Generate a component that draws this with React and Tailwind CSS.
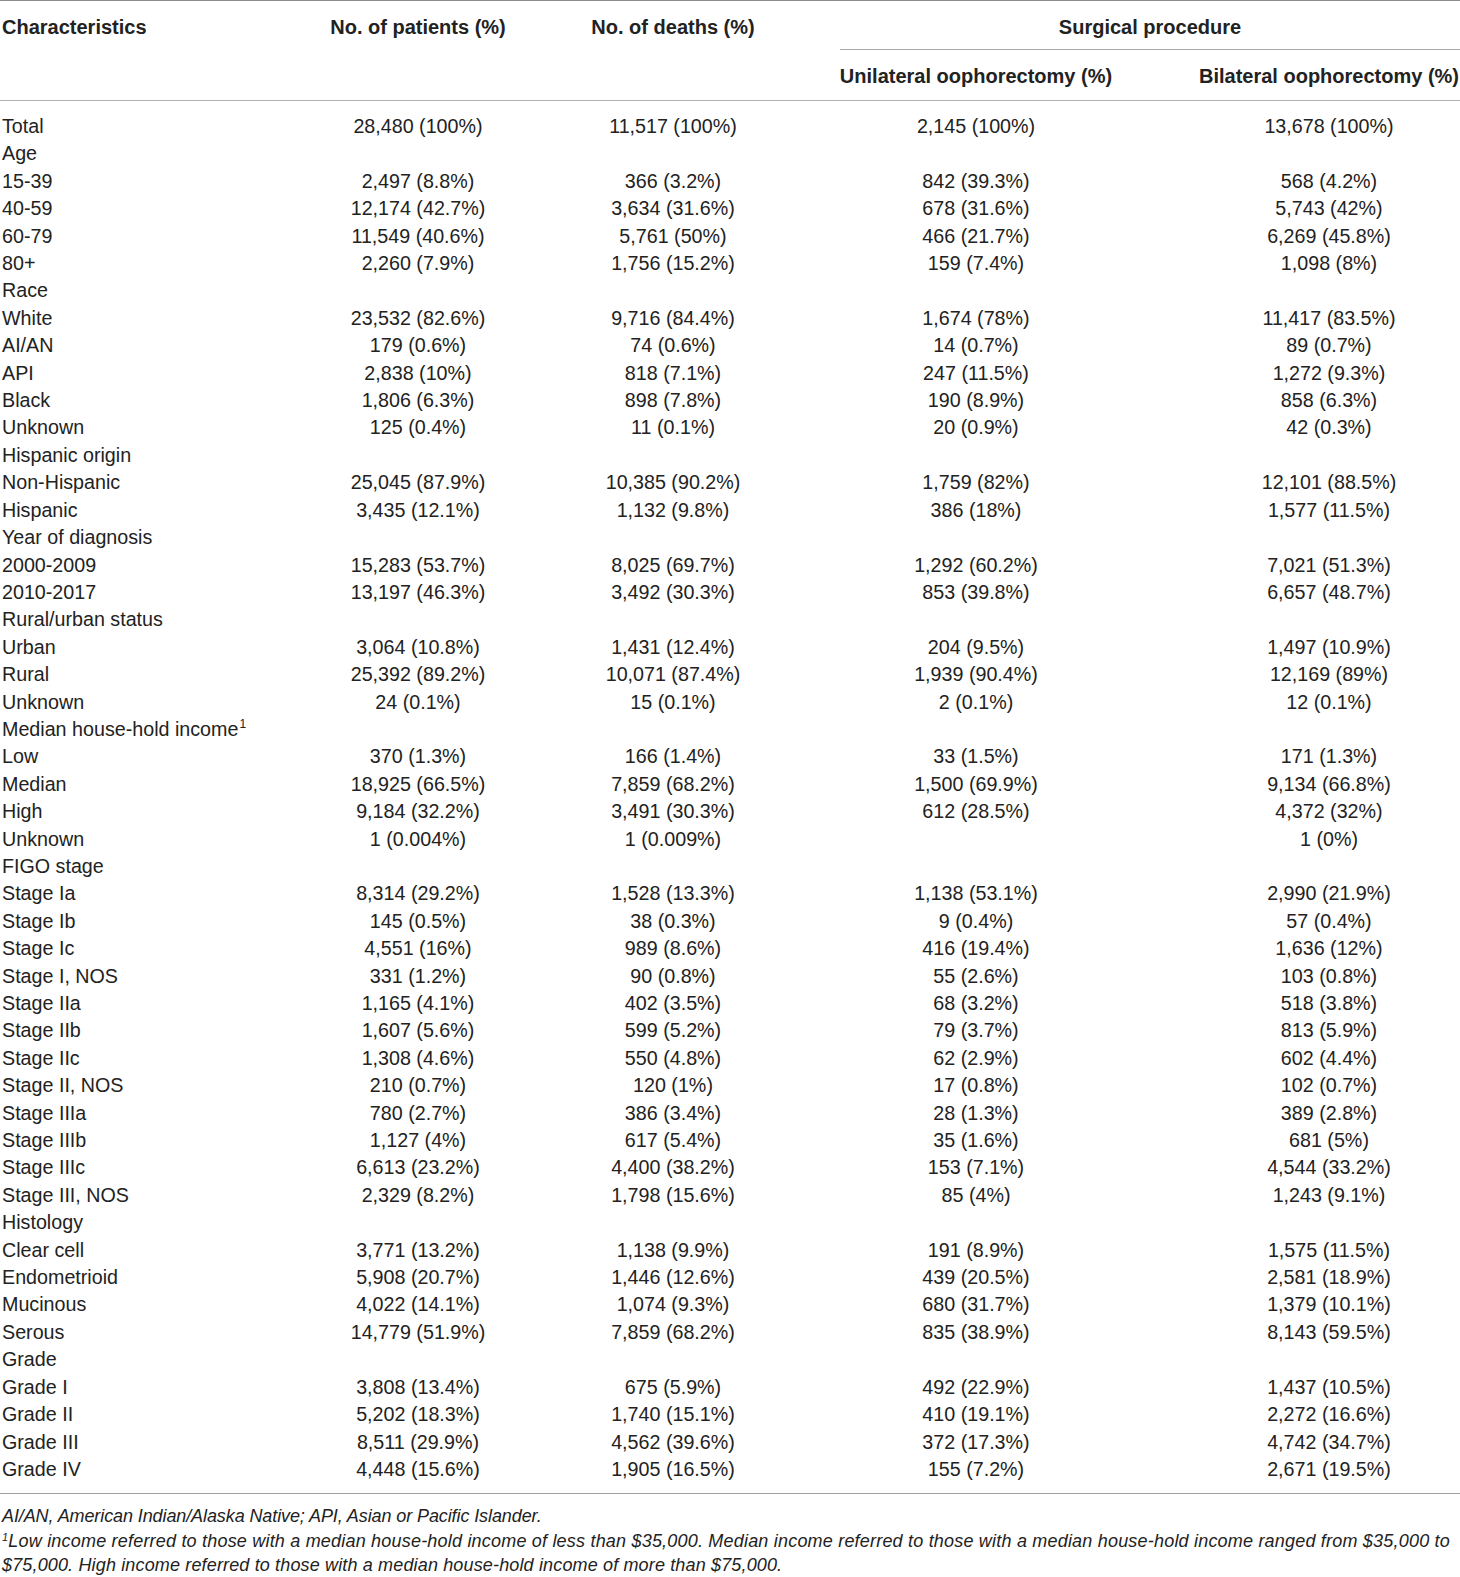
import React from 'react';

const rows = [
  ['Total', '28,480 (100%)', '11,517 (100%)', '2,145 (100%)', '13,678 (100%)'],
  ['Age'],
  ['15-39', '2,497 (8.8%)', '366 (3.2%)', '842 (39.3%)', '568 (4.2%)'],
  ['40-59', '12,174 (42.7%)', '3,634 (31.6%)', '678 (31.6%)', '5,743 (42%)'],
  ['60-79', '11,549 (40.6%)', '5,761 (50%)', '466 (21.7%)', '6,269 (45.8%)'],
  ['80+', '2,260 (7.9%)', '1,756 (15.2%)', '159 (7.4%)', '1,098 (8%)'],
  ['Race'],
  ['White', '23,532 (82.6%)', '9,716 (84.4%)', '1,674 (78%)', '11,417 (83.5%)'],
  ['AI/AN', '179 (0.6%)', '74 (0.6%)', '14 (0.7%)', '89 (0.7%)'],
  ['API', '2,838 (10%)', '818 (7.1%)', '247 (11.5%)', '1,272 (9.3%)'],
  ['Black', '1,806 (6.3%)', '898 (7.8%)', '190 (8.9%)', '858 (6.3%)'],
  ['Unknown', '125 (0.4%)', '11 (0.1%)', '20 (0.9%)', '42 (0.3%)'],
  ['Hispanic origin'],
  ['Non-Hispanic', '25,045 (87.9%)', '10,385 (90.2%)', '1,759 (82%)', '12,101 (88.5%)'],
  ['Hispanic', '3,435 (12.1%)', '1,132 (9.8%)', '386 (18%)', '1,577 (11.5%)'],
  ['Year of diagnosis'],
  ['2000-2009', '15,283 (53.7%)', '8,025 (69.7%)', '1,292 (60.2%)', '7,021 (51.3%)'],
  ['2010-2017', '13,197 (46.3%)', '3,492 (30.3%)', '853 (39.8%)', '6,657 (48.7%)'],
  ['Rural/urban status'],
  ['Urban', '3,064 (10.8%)', '1,431 (12.4%)', '204 (9.5%)', '1,497 (10.9%)'],
  ['Rural', '25,392 (89.2%)', '10,071 (87.4%)', '1,939 (90.4%)', '12,169 (89%)'],
  ['Unknown', '24 (0.1%)', '15 (0.1%)', '2 (0.1%)', '12 (0.1%)'],
  ['Median house-hold income', null, null, null, null, true],
  ['Low', '370 (1.3%)', '166 (1.4%)', '33 (1.5%)', '171 (1.3%)'],
  ['Median', '18,925 (66.5%)', '7,859 (68.2%)', '1,500 (69.9%)', '9,134 (66.8%)'],
  ['High', '9,184 (32.2%)', '3,491 (30.3%)', '612 (28.5%)', '4,372 (32%)'],
  ['Unknown', '1 (0.004%)', '1 (0.009%)', '', '1 (0%)'],
  ['FIGO stage'],
  ['Stage Ia', '8,314 (29.2%)', '1,528 (13.3%)', '1,138 (53.1%)', '2,990 (21.9%)'],
  ['Stage Ib', '145 (0.5%)', '38 (0.3%)', '9 (0.4%)', '57 (0.4%)'],
  ['Stage Ic', '4,551 (16%)', '989 (8.6%)', '416 (19.4%)', '1,636 (12%)'],
  ['Stage I, NOS', '331 (1.2%)', '90 (0.8%)', '55 (2.6%)', '103 (0.8%)'],
  ['Stage IIa', '1,165 (4.1%)', '402 (3.5%)', '68 (3.2%)', '518 (3.8%)'],
  ['Stage IIb', '1,607 (5.6%)', '599 (5.2%)', '79 (3.7%)', '813 (5.9%)'],
  ['Stage IIc', '1,308 (4.6%)', '550 (4.8%)', '62 (2.9%)', '602 (4.4%)'],
  ['Stage II, NOS', '210 (0.7%)', '120 (1%)', '17 (0.8%)', '102 (0.7%)'],
  ['Stage IIIa', '780 (2.7%)', '386 (3.4%)', '28 (1.3%)', '389 (2.8%)'],
  ['Stage IIIb', '1,127 (4%)', '617 (5.4%)', '35 (1.6%)', '681 (5%)'],
  ['Stage IIIc', '6,613 (23.2%)', '4,400 (38.2%)', '153 (7.1%)', '4,544 (33.2%)'],
  ['Stage III, NOS', '2,329 (8.2%)', '1,798 (15.6%)', '85 (4%)', '1,243 (9.1%)'],
  ['Histology'],
  ['Clear cell', '3,771 (13.2%)', '1,138 (9.9%)', '191 (8.9%)', '1,575 (11.5%)'],
  ['Endometrioid', '5,908 (20.7%)', '1,446 (12.6%)', '439 (20.5%)', '2,581 (18.9%)'],
  ['Mucinous', '4,022 (14.1%)', '1,074 (9.3%)', '680 (31.7%)', '1,379 (10.1%)'],
  ['Serous', '14,779 (51.9%)', '7,859 (68.2%)', '835 (38.9%)', '8,143 (59.5%)'],
  ['Grade'],
  ['Grade I', '3,808 (13.4%)', '675 (5.9%)', '492 (22.9%)', '1,437 (10.5%)'],
  ['Grade II', '5,202 (18.3%)', '1,740 (15.1%)', '410 (19.1%)', '2,272 (16.6%)'],
  ['Grade III', '8,511 (29.9%)', '4,562 (39.6%)', '372 (17.3%)', '4,742 (34.7%)'],
  ['Grade IV', '4,448 (15.6%)', '1,905 (16.5%)', '155 (7.2%)', '2,671 (19.5%)'],
];

const cols = 'grid grid-cols-[290px_256px_254px_352px_308px]';

export default function App() {
  return (
    <div
      className="w-[1460px] bg-white text-[#222] min-h-[1577px]"
      style={{ fontFamily: '"Liberation Sans", Arial, sans-serif' }}
    >
      {/* Header */}
      <div className="border-t-[1.5px] border-b-[1.5px] border-t-[#8c8c8c] border-b-[#b0b0b0]">
        <div className={`${cols} grid-rows-[49px_50px] text-[20px] font-bold leading-[28px]`}>
          <div className="pl-[2px] pt-[12px]">Characteristics</div>
          <div className="text-center pt-[12px]">No. of patients (%)</div>
          <div className="text-center pt-[12px]">No. of deaths (%)</div>
          <div className="col-span-2 pl-[40px]">
            <div className="h-[49px] border-b-[1.5px] border-[#a8a8a8] pt-[12px] text-center">
              Surgical procedure
            </div>
          </div>
          <div />
          <div />
          <div />
          <div className="text-center pt-[12px] whitespace-nowrap">Unilateral oophorectomy (%)</div>
          <div className="pl-[46px] text-center pt-[12px] whitespace-nowrap">Bilateral oophorectomy (%)</div>
        </div>
      </div>

      {/* Body */}
      <div className="pt-[12px] pb-[10px] border-b-[1.5px] border-[#a0a0a0] text-[19.7px] leading-[27.42px]">
        {rows.map((r, i) => (
          <div key={i} className={`${cols} h-[27.42px]`}>
            <div className="pl-[2px] whitespace-nowrap">
              {r[0]}
              {r[5] && <span className="inline-block align-top text-[12px] leading-[12px] relative top-[2px] ml-[1px]">1</span>}
            </div>
            <div className="text-center">{r[1]}</div>
            <div className="text-center">{r[2]}</div>
            <div className="text-center">{r[3]}</div>
            <div className="pl-[46px] text-center">{r[4]}</div>
          </div>
        ))}
      </div>

      {/* Footnotes */}
      <div className="pt-[10px] pl-[2px] italic text-[18px] leading-[24.5px] whitespace-nowrap">
        <div className="tracking-[-0.1px]">AI/AN, American Indian/Alaska Native; API, Asian or Pacific Islander.</div>
        <div className="tracking-[0.2px]">
          <span className="inline-block align-top text-[11px] leading-[11px] relative top-[3px]">1</span>Low income referred to those with a median house-hold income of less than $35,000. Median income referred to those with a median house-hold income ranged from $35,000 to
        </div>
        <div className="tracking-[0.15px]">$75,000. High income referred to those with a median house-hold income of more than $75,000.</div>
      </div>
    </div>
  );
}
